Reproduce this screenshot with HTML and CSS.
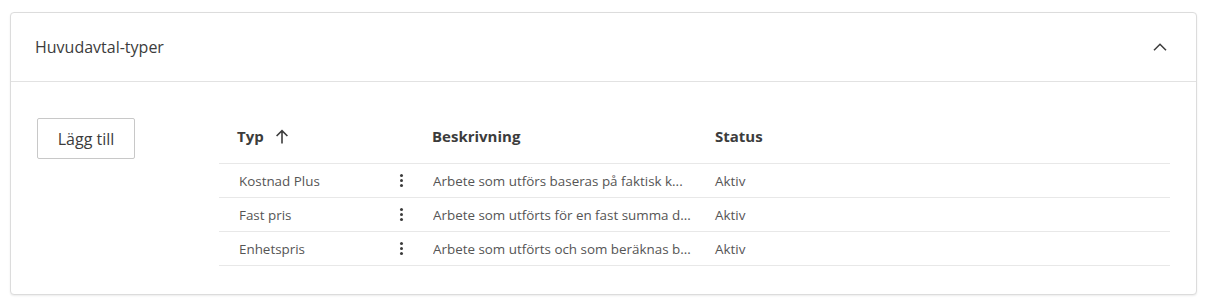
FILE: index.html
```html
<!DOCTYPE html>
<html lang="sv">
<head>
  <meta charset="UTF-8" />
  <meta name="viewport" content="width=device-width, initial-scale=1.0" />
  <title>Huvudavtal-typer</title>
  <link rel="stylesheet" href="styles.css">
</head>
<body>
  <section class="panel">
    <header class="panel-header">
      <h2>Huvudavtal-typer</h2>
      <svg class="chevron" width="14" height="8" viewBox="0 0 14 8" fill="none">
        <path d="M1 7.2 L7 1.2 L13 7.2" stroke="#3c3c3c" stroke-width="1.5" />
      </svg>
    </header>
    <div class="panel-body">
      <div class="actions">
        <button class="btn">Lägg till</button>
      </div>
      <div class="table">
        <div class="row head">
          <div class="cell type">Typ
            <svg class="sort" width="14" height="15" viewBox="0 0 14 15" fill="none">
              <path d="M7 14.5 V1.8 M1.6 7 L7 1.6 L12.4 7" stroke="#3c3c3c" stroke-width="1.6" />
            </svg>
          </div>
          <div class="cell"></div>
          <div class="cell desc">Beskrivning</div>
          <div class="cell status">Status</div>
        </div>
        <div class="row">
          <div class="cell type">Kostnad Plus</div>
          <div class="cell menu"><span class="dots"></span></div>
          <div class="cell desc"><span>Arbete som utförs baseras på faktisk k...</span></div>
          <div class="cell status">Aktiv</div>
        </div>
        <div class="row">
          <div class="cell type">Fast pris</div>
          <div class="cell menu"><span class="dots"></span></div>
          <div class="cell desc"><span>Arbete som utförts för en fast summa d...</span></div>
          <div class="cell status">Aktiv</div>
        </div>
        <div class="row">
          <div class="cell type">Enhetspris</div>
          <div class="cell menu"><span class="dots"></span></div>
          <div class="cell desc"><span>Arbete som utförts och som beräknas b...</span></div>
          <div class="cell status">Aktiv</div>
        </div>
      </div>
    </div>
  </section>
</body>
</html>
```

FILE: styles.css
```css
body {
  margin: 0;
  padding: 12px 9px 14px 10px;
  font-family: "Open Sans", Arial, sans-serif;
  background-color: #fff;
  color: #3c3c3c;
}

.panel {
  border: 1px solid #dcdcdc;
  border-radius: 4px;
  box-shadow: 0 1px 2px rgba(0, 0, 0, 0.08);
  background-color: #fff;
}

.panel-header {
  height: 68px;
  display: flex;
  align-items: center;
  justify-content: space-between;
  padding: 0 29px 0 24px;
  border-bottom: 1px solid #e2e2e2;
}

.panel-header h2 {
  margin: 0;
  font-size: 16px;
  font-weight: normal;
  color: #3c3c3c;
}

.panel-body {
  display: flex;
  padding: 36px 26px 28px 26px;
}

.actions {
  width: 182px;
}

.btn {
  width: 98px;
  height: 41px;
  background-color: #fff;
  border: 1px solid #c8c8c8;
  border-radius: 2px;
  font-family: inherit;
  font-size: 16px;
  color: #3c3c3c;
  cursor: pointer;
}

.table {
  flex: 1;
}

.row {
  display: grid;
  grid-template-columns: 170px 24px 290px 1fr;
  box-sizing: border-box;
  height: 34px;
  border-bottom: 1px solid #e8e8e8;
  font-size: 13.4px;
  color: #555;
}

.row.head {
  height: 46px;
  align-items: start;
  font-size: 15px;
  font-weight: bold;
  color: #3c3c3c;
}

.row.head .cell {
  padding-top: 8px;
  height: 20px;
  line-height: 20px;
}

.cell {
  display: flex;
  align-items: center;
  min-width: 0;
}

.type {
  padding-left: 20px;
}

.row.head .type {
  padding-left: 18px;
}

.sort {
  margin-left: 11px;
}

.desc {
  padding-left: 20px;
}

.row.head .desc {
  padding-left: 19px;
}

.desc span {
  overflow: hidden;
  white-space: nowrap;
  text-overflow: ellipsis;
}

.status {
  padding-left: 12px;
}

.menu {
  justify-content: center;
}

.dots {
  width: 3px;
  height: 3px;
  border-radius: 50%;
  background-color: #3c3c3c;
  box-shadow: 0 -5px 0 #3c3c3c, 0 5px 0 #3c3c3c;
}
```
